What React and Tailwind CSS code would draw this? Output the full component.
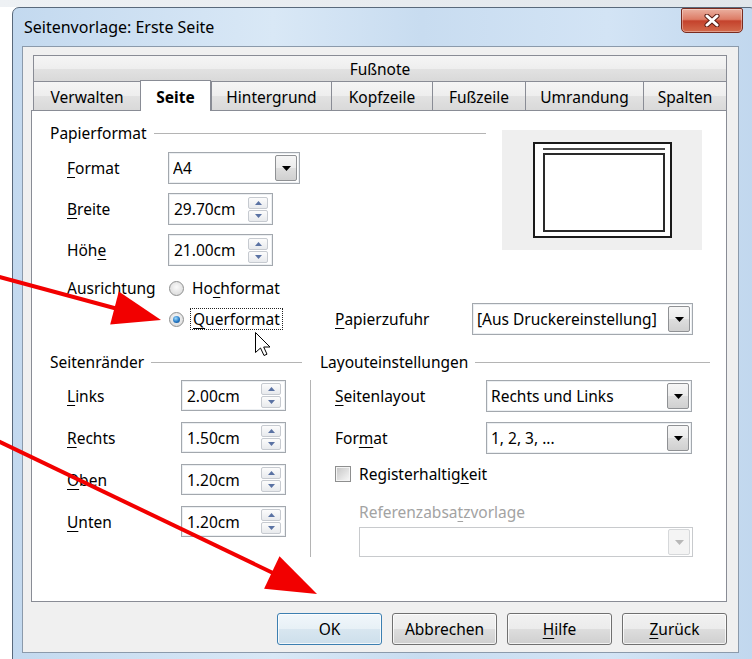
import React from 'react';

// Access-key label: underlines one character of the text
const Mn = ({ text, at }) => {
  if (at === undefined) return text;
  return (
    <>
      {text.slice(0, at)}
      <span className="underline decoration-1 underline-offset-[3px]">{text[at]}</span>
      {text.slice(at + 1)}
    </>
  );
};

const tabBg =
  'bg-[linear-gradient(to_bottom,#f5f5f5_0%,#eeeeee_50%,#e2e2e2_51%,#d9d9d9_100%)]';

const tabs = [
  { label: 'Verwalten', w: 'w-[107px]' },
  { label: 'Seite', w: 'w-[71px]', active: true },
  { label: 'Hintergrund', w: 'w-[120px]' },
  { label: 'Kopfzeile', w: 'w-[101px]' },
  { label: 'Fußzeile', w: 'w-[93px]' },
  { label: 'Umrandung', w: 'w-[118px]' },
  { label: 'Spalten', w: 'w-[84px]' },
];

const GroupTitle = ({ title, className = '' }) => (
  <div className={`flex h-[20px] items-center ${className}`}>
    <span>{title}</span>
    <div className="ml-[7px] mt-px h-px flex-1 bg-[#b4b4b4]" />
  </div>
);

const SpinButtons = () => (
  <div className="flex h-[25px] w-[20px] flex-col gap-px">
    {[true, false].map((up) => (
      <div
        key={up ? 'up' : 'down'}
        className="flex flex-1 items-center justify-center rounded-[2px] border border-[#c6cad0] bg-[linear-gradient(to_bottom,#fcfcfc,#e8eaed)]"
      >
        <svg width="7" height="4" viewBox="0 0 7 4">
          <path d={up ? 'M0 4 L3.5 0 L7 4 Z' : 'M0 0 L3.5 4 L7 0 Z'} fill="#5a72a3" />
        </svg>
      </div>
    ))}
  </div>
);

const SpinField = ({ value, w }) => (
  <div className={`flex h-full items-center border border-[#a3a8ae] bg-white pl-[5px] pr-[4px] shadow-[inset_0_0_0_1px_#eceff2] ${w}`}>
    <span className="flex-1">{value}</span>
    <SpinButtons />
  </div>
);

const ComboBox = ({ value, w, disabled = false }) => (
  <div
    className={`flex h-full items-center border bg-white pl-[4px] pr-[2px] ${
      disabled ? 'border-[#c8cacd]' : 'border-[#a3a8ae] shadow-[inset_0_0_0_1px_#eceff2]'
    } ${w}`}
  >
    <span className="flex-1 truncate">{value}</span>
    <div
      className={`flex h-[26px] w-[22px] items-center justify-center rounded-[2px] border ${
        disabled
          ? 'border-[#d6d8da] bg-[#f4f4f4]'
          : 'border-[#8f9194] bg-[linear-gradient(to_bottom,#f6f6f6_0%,#ebebeb_50%,#dedede_51%,#d0d0d0_100%)]'
      }`}
    >
      <svg width="9" height="5" viewBox="0 0 9 5">
        <path d="M0 0 H9 L4.5 5 Z" fill={disabled ? '#b8b8b8' : '#000'} />
      </svg>
    </div>
  </div>
);

const Radio = ({ checked = false }) => (
  <div className="flex h-[15px] w-[15px] shrink-0 items-center justify-center rounded-full border border-[#8e8f8f] bg-[radial-gradient(circle_at_50%_40%,#fafafa,#d4d4d4)]">
    {checked && (
      <div className="h-[7px] w-[7px] rounded-full bg-[radial-gradient(circle_at_40%_35%,#9fdcff,#2679c4_55%,#0d3f7e)]" />
    )}
  </div>
);

const Checkbox = () => (
  <div className="flex h-[16px] w-[16px] shrink-0 items-center justify-center border border-[#8e8f8f] bg-[#f4f4f4]">
    <div className="h-[12px] w-[12px] bg-[linear-gradient(135deg,#c8c8c8,#f5f5f5)]" />
  </div>
);

const FieldRow = ({ label, at, labelW, children, h = 'h-[32px]' }) => (
  <div className={`flex items-center ${h}`}>
    <div className={`shrink-0 ${labelW}`}>
      <Mn text={label} at={at} />
    </div>
    {children}
  </div>
);

const DlgButton = ({ label, at, primary = false }) => (
  <div
    className={`flex h-[32px] w-[105px] items-center justify-center rounded-[3px] border shadow-[inset_0_0_0_1px_rgba(255,255,255,0.75)] ${
      primary
        ? 'border-[#3c7fb1] bg-[linear-gradient(to_bottom,#f1f7fb_0%,#e7f0f6_50%,#d8e6f0_51%,#cddfeb_100%)]'
        : 'border-[#707070] bg-[linear-gradient(to_bottom,#f2f2f2_0%,#ebebeb_50%,#dddddd_51%,#cfcfcf_100%)]'
    }`}
  >
    <Mn text={label} at={at} />
  </div>
);

const PagePreview = () => (
  <div className="ml-[16px] mt-[7px] flex h-[120px] w-[200px] items-center justify-center bg-[#efefef]">
    <div className="flex h-[96px] w-[139px] flex-col border-2 border-[#1a1a1a] bg-white pb-[4px] pl-[8px] pr-[5px] pt-[4px]">
      <div className="h-[2px] bg-[#4a4a4a]" />
      <div className="mt-[3px] flex-1 border-2 border-[#2a2a2a]" />
    </div>
  </div>
);

const CloseButton = () => (
  <div className="ml-auto mr-[13px] flex h-[25px] w-[62px] items-center justify-center rounded-b-[5px] rounded-t-[2px] border border-[#7a2b1f] bg-[linear-gradient(to_bottom,#eab0a0_0%,#dd7c66_45%,#c4422c_52%,#d36a4c_100%)] shadow-[inset_0_0_0_1px_rgba(255,255,255,0.35)]">
    <svg width="16" height="13" viewBox="0 0 16 13">
      <path d="M3 2 L13 11 M13 2 L3 11" stroke="#5a1d14" strokeWidth="5" strokeLinecap="round" />
      <path d="M3 2 L13 11 M13 2 L3 11" stroke="#fff" strokeWidth="3" strokeLinecap="round" />
    </svg>
  </div>
);

const TabStrip = () => (
  <>
    <div className={`ml-[2px] flex h-[27px] items-center justify-center border border-[#898c95] ${tabBg}`}>
      Fußnote
    </div>
    <div className="relative z-10 -mt-px ml-[2px] flex h-[29px] items-end">
      {tabs.map((t) => (
        <div
          key={t.label}
          className={`flex items-center justify-center border-l border-t border-[#898c95] pt-[2px] last:border-r ${t.w} ${
            t.active ? '-mb-px h-[31px] border-r bg-white font-bold' : `h-[29px] ${tabBg}`
          }`}
        >
          {t.label}
        </div>
      ))}
    </div>
  </>
);

const Panel = () => (
  <div className="h-[492px] border border-[#898c95] bg-white pl-[18px] pt-[12px]">
    {/* Papierformat */}
    <div className="flex">
      <div className="w-[436px]">
        <GroupTitle title="Papierformat" />
        <div className="mt-[9px] flex flex-col gap-[9px] pl-[17px]">
          <FieldRow label="Format" at={0} labelW="w-[101px]">
            <ComboBox value="A4" w="w-[132px]" />
          </FieldRow>
          <FieldRow label="Breite" at={0} labelW="w-[101px]">
            <SpinField value="29.70cm" w="w-[105px]" />
          </FieldRow>
          <FieldRow label="Höhe" at={3} labelW="w-[101px]">
            <SpinField value="21.00cm" w="w-[105px]" />
          </FieldRow>
        </div>
      </div>
      <PagePreview />
    </div>

    <div className="mt-[12px] flex h-[20px] items-center pl-[17px]">
      <div className="w-[102px]">Ausrichtung</div>
      <Radio />
      <div className="ml-[8px]">
        <Mn text="Hochformat" at={2} />
      </div>
    </div>

    <div className="mt-[5px] flex h-[32px] items-center">
      <div className="flex w-[285px] items-center pl-[119px]">
        <Radio checked />
        <div className="ml-[6px] border border-dotted border-[#222] px-[2px] leading-[20px]">
          <Mn text="Querformat" at={0} />
        </div>
      </div>
      <FieldRow label="Papierzufuhr" at={0} labelW="w-[137px]">
        <ComboBox value="[Aus Druckereinstellung]" w="w-[221px]" />
      </FieldRow>
    </div>

    {/* Seitenränder / Layouteinstellungen */}
    <div className="mt-[17px] flex">
      <div className="w-[252px]">
        <GroupTitle title="Seitenränder" />
        <div className="mt-[8px] flex flex-col gap-[11px] pl-[17px]">
          {[
            ['Links', '2.00cm'],
            ['Rechts', '1.50cm'],
            ['Oben', '1.20cm'],
            ['Unten', '1.20cm'],
          ].map(([label, value]) => (
            <FieldRow key={label} label={label} at={0} labelW="w-[114px]" h="h-[31px]">
              <SpinField value={value} w="w-[105px]" />
            </FieldRow>
          ))}
        </div>
      </div>

      <div className="ml-[8px] w-[400px]">
        <GroupTitle title="Layouteinstellungen" className="pl-[10px]" />
        <div className="mt-[8px] h-[177px] border-l border-[#b4b4b4] pl-[24px]">
          <FieldRow label="Seitenlayout" at={0} labelW="w-[151px]">
            <ComboBox value="Rechts und Links" w="w-[206px]" />
          </FieldRow>
          <div className="mt-[10px]">
            <FieldRow label="Format" at={3} labelW="w-[151px]">
              <ComboBox value="1, 2, 3, ..." w="w-[206px]" />
            </FieldRow>
          </div>
          <div className="mt-[10px] flex h-[20px] items-center">
            <Checkbox />
            <div className="ml-[8px]">
              <Mn text="Registerhaltigkeit" at={14} />
            </div>
          </div>
          <div className="ml-[24px] mt-[18px] h-[20px] text-[#a3a3a3]">
            <Mn text="Referenzabsatzvorlage" at={12} />
          </div>
          <div className="ml-[24px] mt-[5px] h-[30px]">
            <ComboBox value="" w="w-[334px]" disabled />
          </div>
        </div>
      </div>
    </div>
  </div>
);

const Window = () => (
  <div className="ml-[12px] h-[660px] w-[745px] rounded-t-[7px] border border-[#59697b] bg-[linear-gradient(to_right,#c3d9ef_0%,#d9e8f6_35%,#c8dcf0_55%,#d3e4f5_80%,#c1d7ee_100%)]">
    <div className="flex h-[38px] items-start">
      <div className="self-center pl-[11px] text-[16px]">Seitenvorlage: Erste Seite</div>
      <CloseButton />
    </div>
    <div className="ml-[9px] h-[607px] w-[717px] border border-[#8b9aab] bg-[#f0f0f0] pl-[8px] pt-[8px]">
      <div className="w-[696px]">
        <TabStrip />
        <Panel />
        <div className="mt-[11px] flex justify-end gap-[10px]">
          <DlgButton label="OK" primary />
          <DlgButton label="Abbrechen" />
          <DlgButton label="Hilfe" at={0} />
          <DlgButton label="Zurück" at={0} />
        </div>
      </div>
    </div>
  </div>
);

// Red pointer arrows and the mouse cursor drawn over the dialog
const Annotations = () => (
  <svg className="pointer-events-none absolute left-0 top-0" width="752" height="659" viewBox="0 0 752 659">
    <line x1="-4" y1="276" x2="116" y2="308.5" stroke="#f20000" strokeWidth="4" />
    <polygon points="161,320 110.2,324.4 118.8,291.4" fill="#f20000" />
    <line x1="-4" y1="440" x2="273" y2="573" stroke="#f20000" strokeWidth="4" />
    <polygon points="317,594 264.1,588.8 279.5,556.2" fill="#f20000" />
    <path
      transform="translate(255.5 332.5)"
      d="M0 0 L0 20 L5 15.5 L8.5 23 L11.5 21.7 L8.2 14.5 L14.5 14.5 Z"
      fill="#fff"
      stroke="#000"
      strokeWidth="1"
      strokeLinejoin="round"
    />
  </svg>
);

export default function App() {
  return (
    <div className="relative h-[659px] w-[752px] overflow-hidden bg-white font-['Noto_Sans',sans-serif] text-[15.5px] leading-[20px] text-black">
      <div className="h-[7px] bg-[linear-gradient(to_right,#eef1f4,#e1e6eb)]" />
      <Window />
      <Annotations />
    </div>
  );
}
